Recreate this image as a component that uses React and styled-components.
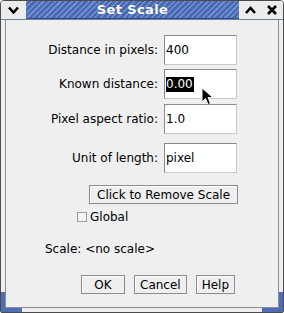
import React from "react";
import styled, { createGlobalStyle } from "styled-components";

const Global = createGlobalStyle`
  html, body {
    margin: 0;
    padding: 0;
    background: #ffffff;
  }
  body {
    font-family: "DejaVu Sans", "Liberation Sans", sans-serif;
    font-size: 12px;
    color: #000;
  }
`;

const Window = styled.div`
  position: relative;
  width: 284px;
  height: 313px;
  box-sizing: border-box;
  border: 1px solid #4b4b4b;
  border-radius: 4px 4px 2px 2px;
  background: #efefef;
  display: flex;
  flex-direction: column;
  overflow: hidden;
`;

const TitleBar = styled.div`
  height: 18px;
  display: flex;
  border-bottom: 1px solid #6d7fa3;
`;

const TitleButton = styled.div`
  width: ${(p) => p.$w}px;
  display: flex;
  align-items: center;
  justify-content: center;
  background: #ececec;
  box-sizing: border-box;
`;

const Title = styled.div`
  flex: 1;
  display: flex;
  align-items: center;
  justify-content: center;
  color: #fff;
  font-weight: bold;
  font-size: 13px;
  letter-spacing: 0.4px;
  background: repeating-linear-gradient(
    135deg,
    #6f8fd0 0px,
    #6f8fd0 1.5px,
    #4a69b0 1.5px,
    #4a69b0 4px
  );
  border-bottom: 1px solid #2f4a86;
  text-shadow: 0 0 1px #2f4a86;
`;

const Frame = styled.div`
  flex: 1;
  display: flex;
  padding: 0 4px 4px 4px;
`;

const Content = styled.div`
  position: relative;
  flex: 1;
  display: flex;
  flex-direction: column;
  border: 1px solid #8e8e8e;
  border-top: none;
  background: #efefef;
`;

const Row = styled.div`
  display: grid;
  grid-template-columns: 152px 73px;
  column-gap: 6px;
  align-items: center;
  margin-top: ${(p) => p.$mt}px;
`;

const Label = styled.div`
  text-align: right;
`;

const Field = styled.div`
  position: relative;
  height: 30px;
  box-sizing: border-box;
  background: #fff;
  border: 1px solid #c8c8c8;
  border-top-color: #8a8a8a;
  border-left-color: #8a8a8a;
  display: flex;
  align-items: center;
  padding-left: 1px;
`;

const Selected = styled.span`
  background: #000;
  color: #fff;
  line-height: 15px;
  padding-right: 1px;
`;

const Cursor = styled.svg`
  position: absolute;
  left: 36px;
  top: 17px;
`;

const ButtonRow = styled.div`
  display: flex;
  gap: ${(p) => p.$gap || 0}px;
  margin-top: ${(p) => p.$mt}px;
  padding-left: ${(p) => p.$pl}px;
`;

const Button = styled.div`
  height: 19px;
  min-width: ${(p) => p.$minW || 0}px;
  box-sizing: border-box;
  padding: 0 ${(p) => p.$px || 5}px;
  display: flex;
  align-items: center;
  justify-content: center;
  border: 1px solid #8c8c8c;
  background: #efefef;
  box-shadow: inset 1px 1px 0 #fff;
`;

const CheckRow = styled.div`
  display: flex;
  align-items: center;
  gap: 3px;
  margin-top: 6px;
  padding-left: 71px;
`;

const Box = styled.div`
  width: 10px;
  height: 10px;
  box-sizing: border-box;
  border: 1px solid #9a9a9a;
  background: #f4f4f4;
`;

const ScaleText = styled.div`
  margin-top: 18px;
  padding-left: 39px;
`;

const Corner = styled.div`
  position: absolute;
  bottom: 0;
  ${(p) => (p.$side === "left" ? "left: 0;" : "right: 0;")}
  width: 21px;
  height: 20px;
  box-sizing: border-box;
  border-bottom: 4px solid #4f6db6;
  ${(p) =>
    p.$side === "left"
      ? "border-left: 4px solid #4f6db6;"
      : "border-right: 4px solid #4f6db6;"}
`;

function Chevron({ up }) {
  return (
    <svg width="11" height="8" viewBox="0 0 11 8">
      <path
        d={up ? "M1 7 L5.5 2 L10 7" : "M1 1.5 L5.5 6.5 L10 1.5"}
        fill="none"
        stroke="#000"
        strokeWidth="2.6"
      />
    </svg>
  );
}

function CloseIcon() {
  return (
    <svg width="10" height="10" viewBox="0 0 10 10">
      <path d="M1 1 L9 9 M9 1 L1 9" stroke="#000" strokeWidth="2.6" />
    </svg>
  );
}

const rows = [
  { label: "Distance in pixels:", value: "400", mt: 15 },
  { label: "Known distance:", value: "0.00", mt: 4, selected: true },
  { label: "Pixel aspect ratio:", value: "1.0", mt: 5 },
  { label: "Unit of length:", value: "pixel", mt: 9 },
];

export default function App() {
  return (
    <>
      <Global />
      <Window>
        <TitleBar>
          <TitleButton $w={25}>
            <Chevron />
          </TitleButton>
          <Title>Set Scale</Title>
          <TitleButton $w={22}>
            <Chevron up />
          </TitleButton>
          <TitleButton $w={22}>
            <CloseIcon />
          </TitleButton>
        </TitleBar>
        <Frame>
          <Content>
            {rows.map((r) => (
              <Row key={r.label} $mt={r.mt}>
                <Label>{r.label}</Label>
                <Field>
                  {r.selected ? <Selected>{r.value}</Selected> : r.value}
                  {r.selected && (
                    <Cursor width="14" height="20" viewBox="0 0 14 20">
                      <path
                        d="M1 1 L1 15 L4.5 11.5 L7 17.5 L9.5 16.5 L7 10.5 L12 10.5 Z"
                        fill="#000"
                        stroke="#fff"
                        strokeWidth="1"
                        strokeLinejoin="round"
                      />
                    </Cursor>
                  )}
                </Field>
              </Row>
            ))}
            <ButtonRow $mt={12} $pl={83}>
              <Button $px={7}>Click to Remove Scale</Button>
            </ButtonRow>
            <CheckRow>
              <Box />
              <span>Global</span>
            </CheckRow>
            <ScaleText>Scale: &lt;no scale&gt;</ScaleText>
            <ButtonRow $mt={19} $pl={75} $gap={9}>
              <Button $minW={44}>OK</Button>
              <Button>Cancel</Button>
              <Button>Help</Button>
            </ButtonRow>
          </Content>
        </Frame>
        <Corner $side="left" />
        <Corner $side="right" />
      </Window>
    </>
  );
}
